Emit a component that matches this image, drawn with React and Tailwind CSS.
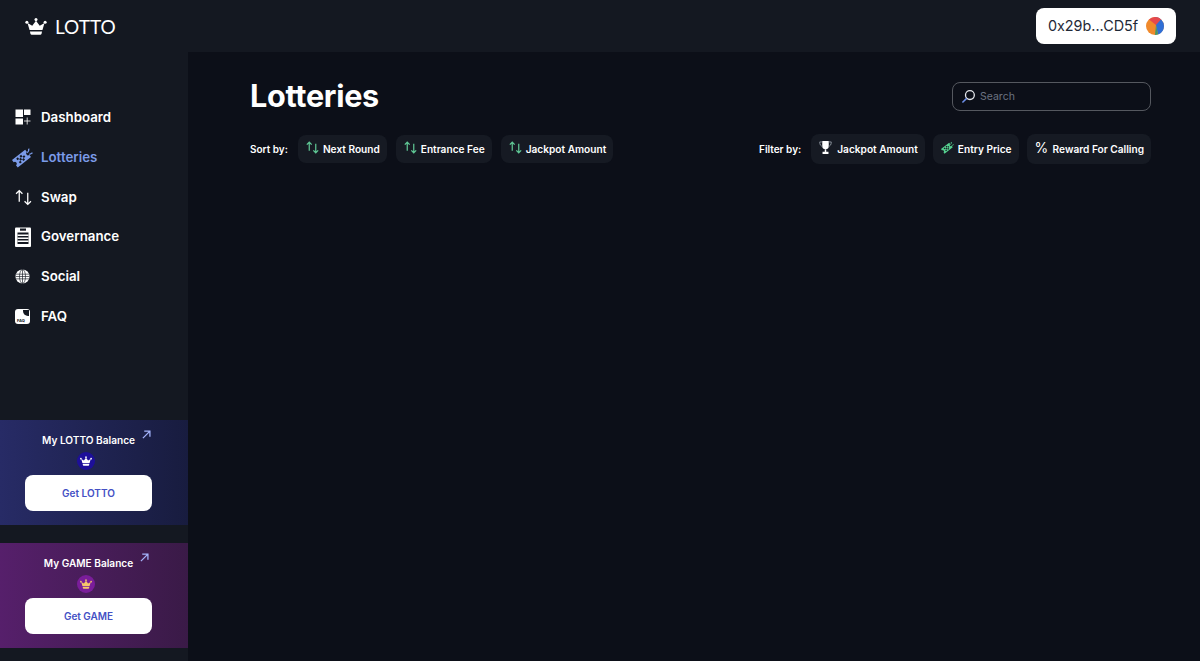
import React from 'react';

const CrownIcon = ({ className, fill = '#ffffff' }) => (
  <svg viewBox="0 0 24 19" className={className} fill={fill}>
    <circle cx="12" cy="1.800" r="1.700" />
    <circle cx="1.800" cy="4.800" r="1.700" />
    <circle cx="22.200" cy="4.800" r="1.700" />
    <path d="M12 3l4.200 5.600 5.300-3-2.300 7.900H4.800L2.500 5.600l5.300 3z" />
    <path d="M5.200 15h13.600l-.6 2.700a1.500 1.500 0 0 1-1.400 1.100H7.200a1.500 1.500 0 0 1-1.400-1.100z" />
  </svg>
);

const DashboardIcon = () => (
  <svg viewBox="0 0 16 16" className="w-4 h-4" fill="#fff">
    <rect x="0.500" y="0.500" width="7.500" height="7.500" />
    <rect x="9" y="0.500" width="6.500" height="5.500" />
    <rect x="0.500" y="9.500" width="7.500" height="6" />
    <path d="M12.200 8.500v7M9 12h6.500" stroke="#fff" strokeWidth="0.800" fill="none" />
  </svg>
);

const TicketIcon = ({ className, color, bg = '#141821' }) => (
  <svg viewBox="0 0 20 20" className={className}>
    <g transform="rotate(-38 9 11)">
      <path
        fill={color}
        d="M1 6.500h16v2.700a1.800 1.800 0 0 0 0 3.600v2.700H1v-2.700a1.800 1.800 0 0 0 0-3.600z"
      />
      <g fill={bg}>
        <rect x="5" y="8" width="2" height="2" />
        <rect x="9" y="8" width="2" height="2" />
        <rect x="7" y="10" width="2" height="2" />
        <rect x="11" y="10" width="2" height="2" />
        <rect x="5" y="12" width="2" height="2" />
        <rect x="9" y="12" width="2" height="2" />
      </g>
    </g>
    <path d="M14.500 5.500C15.500 4.800 16.200 3.500 16 1.500M16.500 7c1 -.3 2 -.8 3 -1.500" stroke={color} strokeWidth="1.300" fill="none" />
  </svg>
);

const SwapArrows = ({ className, color = '#fff', weight = '1.200' }) => (
  <svg viewBox="0 0 16 16" className={className} fill="none" stroke={color} strokeWidth={weight}>
    <path d="M4 12V1.500M1 4.500l3-3 3 3" />
    <path d="M12 3.500V14.500M9 11.500l3 3 3-3" />
  </svg>
);

const GovernanceIcon = () => (
  <svg viewBox="0 0 16 20" className="w-4 h-5">
    <rect x="0" y="0.500" width="16" height="19.500" rx="1" fill="#fff" />
    <rect x="5" y="1.500" width="6" height="2.200" fill="#141821" />
    <rect x="2.500" y="5.500" width="11" height="11.500" fill="#141821" />
    <path stroke="#fff" strokeWidth="1.500" d="M2.500 8.200h11M2.500 11.200h11M2.500 14.200h11" />
  </svg>
);

const GlobeIcon = () => (
  <svg viewBox="0 0 16 16" className="w-[15px] h-[15px]" fill="none">
    <circle cx="8" cy="8" r="7.500" fill="#fff" />
    <g stroke="#141821" strokeWidth="0.700">
      <path d="M1 5.500h14M0.500 8h15M1 10.500h14" />
      <ellipse cx="8" cy="8" rx="3.200" ry="7.500" />
      <path d="M8 0.500v15" />
    </g>
  </svg>
);

const FaqIcon = () => (
  <div className="relative w-[15px] h-[15px] rounded-[3px] bg-white overflow-hidden">
    <div className="absolute right-[1px] top-[1px] w-[6px] h-[6px] rounded-bl-[5px] bg-[#141821]" />
    <span className="absolute left-[2px] bottom-[1px] text-[4px] leading-none font-bold text-[#141821]">FAQ</span>
  </div>
);

const TrophyIcon = () => (
  <svg viewBox="0 0 14 16" className="w-[13px] h-[15px] -mt-[3px]" fill="#fff">
    <path d="M3.500 1h7v5.500a3.500 3.500 0 0 1-7 0z" />
    <path d="M3.500 2H.8c0 3 1 4.500 3.200 4.800M10.500 2h2.700c0 3-1 4.500-3.200 4.800" fill="none" stroke="#9ca3af" strokeWidth="0.900" />
    <path d="M6.200 10h1.600v2.500H6.200zM3.800 12.500h6.400V15H3.800z" />
  </svg>
);

const SearchIcon = () => (
  <svg viewBox="0 0 16 16" className="w-[15px] h-[15px]" fill="none" strokeWidth="1.400">
    <circle cx="9.500" cy="6.500" r="4.700" stroke="#e5e7eb" />
    <path d="M6 10L1.500 14.500" stroke="#6d8fe8" strokeWidth="1.600" />
  </svg>
);

const NE_ARROW = (
  <svg viewBox="0 0 10 10" className="w-[9px] h-[9px]" fill="none" stroke="#a5b4fc" strokeWidth="1.400">
    <path d="M1 9L8.500 1.500M2.500 1.200H8.800v6.300" />
  </svg>
);

const navItems = [
  { label: 'Dashboard', icon: <DashboardIcon /> },
  { label: 'Lotteries', icon: <TicketIcon className="w-[21px] h-[21px] -ml-[3px]" color="#7b9be8" />, active: true },
  { label: 'Swap', icon: <SwapArrows className="w-[17px] h-[17px]" /> },
  { label: 'Governance', icon: <GovernanceIcon /> },
  { label: 'Social', icon: <GlobeIcon /> },
  { label: 'FAQ', icon: <FaqIcon /> },
];

const BalanceCard = ({ title, button, gradient, badge, crown }) => (
  <div className={`h-[105px] pt-[12px] pr-[11px] flex flex-col items-center ${gradient}`}>
    <div className="relative h-[17px] flex items-center">
      <span className="text-[10.100px] font-semibold text-white leading-none">{title}</span>
      <span className="absolute -right-[16px] -top-[2px]">{NE_ARROW}</span>
    </div>
    <div className={`mt-[3px] -ml-[5px] w-[18px] h-[18px] rounded-full flex items-center justify-center ${badge}`}>
      <CrownIcon className="w-[12px] h-[10px]" fill={crown} />
    </div>
    <button className="mt-[5px] w-[127px] h-[36px] pt-[1px] rounded-lg bg-white text-[10px] font-semibold text-[#4450c4]">
      {button}
    </button>
  </div>
);

const Pill = ({ icon, label, tall }) => (
  <div className={`flex items-center rounded-lg bg-[#161a23] pl-[8px] pr-[7px] text-[10.150px] font-semibold text-white ${tall ? 'h-[30px] gap-[5px]' : 'h-[28px] gap-[4px]'}`}>
    {icon}
    <span className="mt-[1px]">{label}</span>
  </div>
);

const sortBy = ['Next Round', 'Entrance Fee', 'Jackpot Amount'];

export default function App() {
  return (
    <div className="w-[1200px] h-[661px] overflow-hidden flex flex-col bg-[#0c0f18] font-['Inter',sans-serif]">
      <header className="h-[52px] shrink-0 bg-[#141821] flex items-center justify-between pl-[25px] pr-[24px]">
        <div className="flex items-center gap-[8px]">
          <CrownIcon className="w-[22px] h-[17px]" />
          <span className="font-['Lato',sans-serif] text-[19px] text-white leading-none">LOTTO</span>
        </div>
        <button className="h-[36px] w-[140px] rounded-lg bg-white flex items-center justify-center gap-[8px] text-[14.400px] text-[#1f2937]">
          0x29b...CD5f
          <svg viewBox="0 0 18 18" className="w-[18px] h-[18px]">
            <circle cx="9" cy="9" r="9" fill="#f08a2c" />
            <path d="M9 0a9 9 0 0 1 9 9 9 9 0 0 1-6 8.500L10 8z" fill="#2f6fd6" />
            <path d="M10 8l2 9.500a9 9 0 0 1-3 .500z" fill="#3f9a6a" />
            <path d="M3 2.500A9 9 0 0 1 15 2.300L10 8z" fill="#e5484d" />
          </svg>
        </button>
      </header>

      <div className="flex-1 flex min-h-0">
        <aside className="w-[188px] shrink-0 bg-[#141821] flex flex-col">
          <nav className="mt-[45.600px] h-[239px] flex flex-col">
            {navItems.map((item) => (
              <div key={item.label} className="h-[39.800px] flex items-center">
                <div className="w-[41px] pl-[15px] flex items-center">{item.icon}</div>
                <span className={`mt-[1px] text-[13.300px] font-semibold ${item.active ? 'text-[#7b9be8]' : 'text-white'}`}>
                  {item.label}
                </span>
              </div>
            ))}
          </nav>
          <div className="mt-[83.400px] flex flex-col gap-[18px]">
            <BalanceCard
              title="My LOTTO Balance"
              button="Get LOTTO"
              gradient="bg-gradient-to-r from-[#272b66] to-[#181c3f]"
              badge="bg-[#1d0f9a]"
              crown="#ffffff"
            />
            <BalanceCard
              title="My GAME Balance"
              button="Get GAME"
              gradient="bg-gradient-to-r from-[#561f6b] to-[#3a1a47]"
              badge="bg-[#7a1d9a]"
              crown="#f6c56b"
            />
          </div>
        </aside>

        <main className="flex-1 pl-[62px] pr-[49px] pt-[25px]">
          <div className="flex items-center justify-between h-[40px]">
            <h1 className="-mt-[2px] text-[30.600px] font-bold text-white leading-none tracking-[-0.300px]">Lotteries</h1>
            <div className="w-[199px] h-[29px] -mt-[1px] rounded-lg border border-[#55585f] flex items-center gap-[4px] pl-[8px]">
              <SearchIcon />
              <span className="text-[10.500px] text-[#6b7280]">Search</span>
            </div>
          </div>
          <div className="mt-[17px] flex items-center justify-between">
            <div className="flex items-center gap-[9px]">
              <span className="mr-[1px] text-[10px] font-semibold text-white">Sort by:</span>
              {sortBy.map((label) => (
                <Pill key={label} label={label} icon={<SwapArrows className="w-[13px] h-[13px] -mt-[3px]" color="#5fc795" weight="1.500" />} />
              ))}
            </div>
            <div className="flex items-center gap-[8px]">
              <span className="mr-[2px] text-[10px] font-semibold text-white">Filter by:</span>
              <Pill tall label="Jackpot Amount" icon={<TrophyIcon />} />
              <Pill tall label="Entry Price" icon={<TicketIcon className="w-[13px] h-[13px] -mt-[3px] -mr-[1px]" color="#55d08f" bg="#161a23" />} />
              <Pill tall label="Reward For Calling" icon={<span className="-mt-[3px] w-[13px] text-[14px] font-normal text-white leading-none">%</span>} />
            </div>
          </div>
        </main>
      </div>
    </div>
  );
}
